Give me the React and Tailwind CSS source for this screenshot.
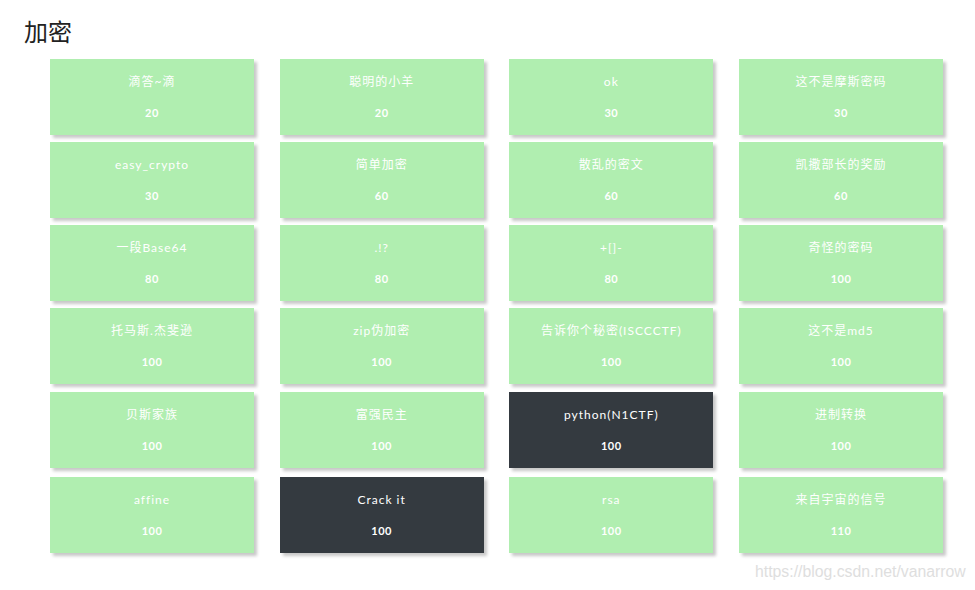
import React from "react";

const rows = [
  [["滴答~滴", "20"], ["聪明的小羊", "20"], ["ok", "30"], ["这不是摩斯密码", "30"]],
  [["easy_crypto", "30"], ["简单加密", "60"], ["散乱的密文", "60"], ["凯撒部长的奖励", "60"]],
  [["一段Base64", "80"], [".!?", "80"], ["+[]-", "80"], ["奇怪的密码", "100"]],
  [["托马斯.杰斐逊", "100"], ["zip伪加密", "100"], ["告诉你个秘密(ISCCCTF)", "100"], ["这不是md5", "100"]],
  [["贝斯家族", "100"], ["富强民主", "100"], ["python(N1CTF)", "100", true], ["进制转换", "100"]],
  [["affine", "100"], ["Crack it", "100", true], ["rsa", "100"], ["来自宇宙的信号", "110"]],
];

const rowMargins = ["mt-0", "mt-[7px]", "mt-[7px]", "mt-[7px]", "mt-[8px]", "mt-[9px]"];

function Card({ title, score, dark }) {
  return (
    <div
      className={
        "h-[76px] flex flex-col items-center text-white shadow-[3px_3px_3px_rgba(0,0,0,0.22)] " +
        (dark ? "bg-[#343a40]" : "bg-[#b0eeb0]")
      }
    >
      <div className="mt-[15px] h-[16px] leading-[16px] text-[12px] tracking-[1px]">{title}</div>
      <div className="mt-[15px] h-[16px] leading-[16px] text-[11px] font-bold tracking-[0.5px]">{score}</div>
    </div>
  );
}

export default function App() {
  return (
    <div
      className="relative w-[975px] h-[590px] bg-white overflow-hidden"
      style={{ fontFamily: 'Lato, "Noto Sans CJK SC", sans-serif' }}
    >
      <div className="pl-[24px] pt-[14px] text-[24px] leading-[36px] text-[#222]">加密</div>
      <div className="mt-[9px] pl-[50px] flex flex-col">
        {rows.map((row, i) => (
          <div key={i} className={"grid grid-cols-[204px_204px_204px_204px] gap-x-[25.67px] " + rowMargins[i]}>
            {row.map(([t, s, d], j) => (
              <Card key={j} title={t} score={s} dark={d} />
            ))}
          </div>
        ))}
      </div>
      <div
        className="absolute left-[755px] top-[562px] text-[15.8px] leading-[20px] text-[#dedede]"
        style={{ fontFamily: '"Liberation Sans", Arial, sans-serif' }}
      >
        https://blog.csdn.net/vanarrow
      </div>
    </div>
  );
}
